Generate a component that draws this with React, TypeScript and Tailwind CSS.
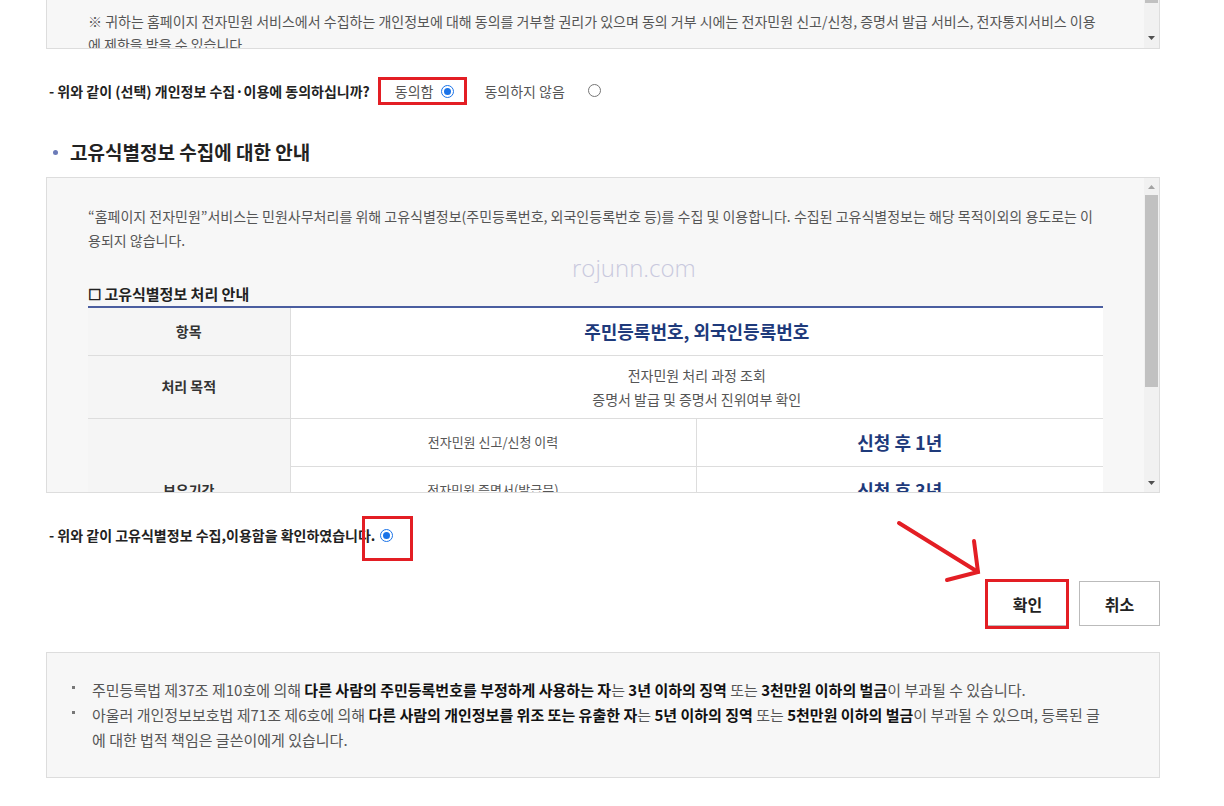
import React from "react";

const Radio = ({ checked }: { checked?: boolean }) =>
  checked ? (
    <span className="inline-flex w-[13px] h-[13px] shrink-0 items-center justify-center rounded-full border-[1.5px] border-[#1a73e8] bg-white">
      <span className="w-[7px] h-[7px] rounded-full bg-[#1a73e8]" />
    </span>
  ) : (
    <span className="inline-block w-[13px] h-[13px] shrink-0 rounded-full border border-[#767676] bg-white" />
  );

const ArrowUp = () => (
  <svg width="7" height="4" viewBox="0 0 7 4">
    <path d="M0 4 L3.5 0 L7 4 Z" fill="#a3a3a3" />
  </svg>
);

const ArrowDown = () => (
  <svg width="7" height="4" viewBox="0 0 7 4">
    <path d="M0 0 L3.5 4 L7 0 Z" fill="#505050" />
  </svg>
);

const retention = [
  { item: "전자민원 신고/신청 이력", period: "신청 후 1년" },
  { item: "전자민원 증명서(발급문)", period: "신청 후 3년" },
  { item: "전자통지서비스 이용 이력", period: "신청 후 3년" },
];

export default function App() {
  return (
    <div className="w-[1224px] min-h-[806px] bg-white font-['Noto_Sans_CJK_KR',sans-serif] text-[#555]">
      <div className="ml-[46px] w-[1114px]">
        {/* 선택 개인정보 안내 (스크롤 박스) */}
        <div className="flex h-[49px] overflow-hidden border border-t-0 border-[#ddd] bg-[#f7f7f7]">
          <div className="flex-1 pl-[41px] pr-[41px] pt-[10px] text-[14px] leading-[23px]">
            <span className="block whitespace-nowrap">
              ※ 귀하는 홈페이지 전자민원 서비스에서 수집하는 개인정보에 대해 동의를 거부할 권리가 있으며 동의 거부 시에는 전자민원 신고/신청, 증명서 발급 서비스, 전자통지서비스 이용
            </span>
            <span className="block whitespace-nowrap">에 제한을 받을 수 있습니다.</span>
          </div>
          <div className="flex w-[15px] flex-col items-center bg-[#f1f1f1]">
            <div className="h-[3px] w-[13px] bg-[#c1c1c1]" />
            <div className="flex-1" />
            <div className="mb-[8px]">
              <ArrowDown />
            </div>
          </div>
        </div>

        <div className="mt-[28px] flex h-[28px] items-center text-[14px]">
          <span className="pl-[3px] font-bold text-[#222]">- 위와 같이 (선택) 개인정보 수집·이용에 동의하십니까?</span>
          <span className="ml-[8px] flex h-[28px] items-center gap-[8px] border-[3px] border-[#e31e24] pl-[14px] pr-[10px]">
            동의함 <Radio checked />
          </span>
          <span className="ml-[17px]">동의하지 않음</span>
          <span className="ml-[23px]">
            <Radio />
          </span>
        </div>

        <h2 className="mt-[34px] flex items-center gap-[12px] pl-[7px] text-[19px] font-bold leading-[26px] text-[#222]">
          <span className="h-[5px] w-[5px] rounded-full bg-[#6b7bb8]" />
          고유식별정보 수집에 대한 안내
        </h2>

        {/* 고유식별정보 안내 (스크롤 박스) */}
        <div className="mt-[12px] flex h-[316px] overflow-hidden border border-[#ddd] bg-[#f7f7f7]">
          <div className="relative flex-1 px-[41px] pt-[26px]">
            <p className="text-[14px] leading-[24px]">
              <span className="block whitespace-nowrap">
                “홈페이지 전자민원”서비스는 민원사무처리를 위해 고유식별정보(주민등록번호, 외국인등록번호 등)를 수집 및 이용합니다. 수집된 고유식별정보는 해당 목적이외의 용도로는 이
              </span>
              <span className="block">용되지 않습니다.</span>
            </p>
            <span className="absolute left-[525px] top-[72px] font-['Open_Sans',sans-serif] text-[24px] font-light text-[#c9c9de]">
              rojunn.com
            </span>
            <h3 className="mt-[32px] text-[15px] font-bold leading-[20px] text-[#222]">☐ 고유식별정보 처리 안내</h3>
            <table className="mt-[2px] w-full table-fixed border-collapse border-t-2 border-[#4b5ea0] text-center text-[13px]">
              <colgroup>
                <col className="w-[202px]" />
                <col className="w-[406px]" />
                <col />
              </colgroup>
              <tbody>
                <tr className="h-[48px]">
                  <th className="border-b border-[#ddd] bg-[#f5f5f5] text-[14px] font-bold text-[#333]">항목</th>
                  <td colSpan={2} className="border-b border-l border-[#ddd] bg-white text-[18px] font-bold text-[#1e3a7b]">
                    주민등록번호, 외국인등록번호
                  </td>
                </tr>
                <tr className="h-[63px]">
                  <th className="border-b border-[#ddd] bg-[#f5f5f5] text-[14px] font-bold text-[#333]">처리 목적</th>
                  <td colSpan={2} className="border-b border-l border-[#ddd] bg-white text-[14px] leading-[24px]">
                    전자민원 처리 과정 조회
                    <br />
                    증명서 발급 및 증명서 진위여부 확인
                  </td>
                </tr>
                {retention.map((r, i) => (
                  <tr key={i} className="h-[48px]">
                    {i === 0 && (
                      <th rowSpan={3} className="border-b border-[#ddd] bg-[#f5f5f5] text-[14px] font-bold text-[#333]">
                        보유기간
                      </th>
                    )}
                    <td className="border-b border-l border-[#ddd] bg-white">{r.item}</td>
                    <td className="border-b border-l border-[#ddd] bg-white text-[18px] font-bold text-[#1e3a7b]">{r.period}</td>
                  </tr>
                ))}
              </tbody>
            </table>
          </div>
          <div className="flex w-[15px] flex-col items-center bg-[#f1f1f1]">
            <div className="mt-[7px]">
              <ArrowUp />
            </div>
            <div className="mt-[6px] h-[192px] w-[13px] bg-[#c1c1c1]" />
            <div className="flex-1" />
            <div className="mb-[7px]">
              <ArrowDown />
            </div>
          </div>
        </div>

        <div className="relative mt-[28px] flex h-[28px] items-center gap-[5px] pl-[3px] text-[14px] font-bold text-[#222]">
          - 위와 같이 고유식별정보 수집,이용함을 확인하였습니다.
          <Radio checked />
          <span className="absolute left-[316px] top-[-5px] h-[45px] w-[51px] border-[3px] border-[#e31e24]" />
        </div>

        <div className="relative mt-[32px] flex justify-end gap-[11px]">
          <svg className="absolute left-[844px] top-[-66px]" width="100" height="75" viewBox="0 0 100 75">
            <g stroke="#e31e24" strokeWidth="4" strokeLinecap="round" fill="none">
              <path d="M9 8 L88 57" />
              <path d="M84 26 L88 57 L57 65" />
            </g>
          </svg>
          <button className="relative h-[45px] w-[81px] border border-[#bbb] bg-white text-[16px] font-bold text-[#222]">
            확인
            <span className="absolute -left-[3px] -top-[3px] h-[50px] w-[84px] border-[3px] border-[#e31e24]" />
          </button>
          <button className="h-[45px] w-[81px] border border-[#bbb] bg-white text-[16px] font-bold text-[#222]">취소</button>
        </div>

        {/* 벌칙 안내 */}
        <div className="mt-[26px] h-[126px] border border-[#ddd] bg-[#f7f7f7] pl-[25px] pr-[20px] pt-[24px] text-[15px] leading-[25px]">
          <ul>
            <li className="flex">
              <span className="w-[20px] shrink-0 pt-[9px]">
                <span className="block h-[3px] w-[3px] bg-[#777]" />
              </span>
              <span className="whitespace-nowrap">
                주민등록법 제37조 제10호에 의해 <b className="text-[#111]">다른 사람의 주민등록번호를 부정하게 사용하는 자</b>는{" "}
                <b className="text-[#111]">3년 이하의 징역</b> 또는 <b className="text-[#111]">3천만원 이하의 벌금</b>이 부과될 수 있습니다.
              </span>
            </li>
            <li className="flex">
              <span className="w-[20px] shrink-0 pt-[9px]">
                <span className="block h-[3px] w-[3px] bg-[#777]" />
              </span>
              <span>
                <span className="block whitespace-nowrap">
                  아울러 개인정보보호법 제71조 제6호에 의해 <b className="text-[#111]">다른 사람의 개인정보를 위조 또는 유출한 자</b>는{" "}
                  <b className="text-[#111]">5년 이하의 징역</b> 또는 <b className="text-[#111]">5천만원 이하의 벌금</b>이 부과될 수 있으며, 등록된 글
                </span>
                <span className="block">에 대한 법적 책임은 글쓴이에게 있습니다.</span>
              </span>
            </li>
          </ul>
        </div>
      </div>
    </div>
  );
}
